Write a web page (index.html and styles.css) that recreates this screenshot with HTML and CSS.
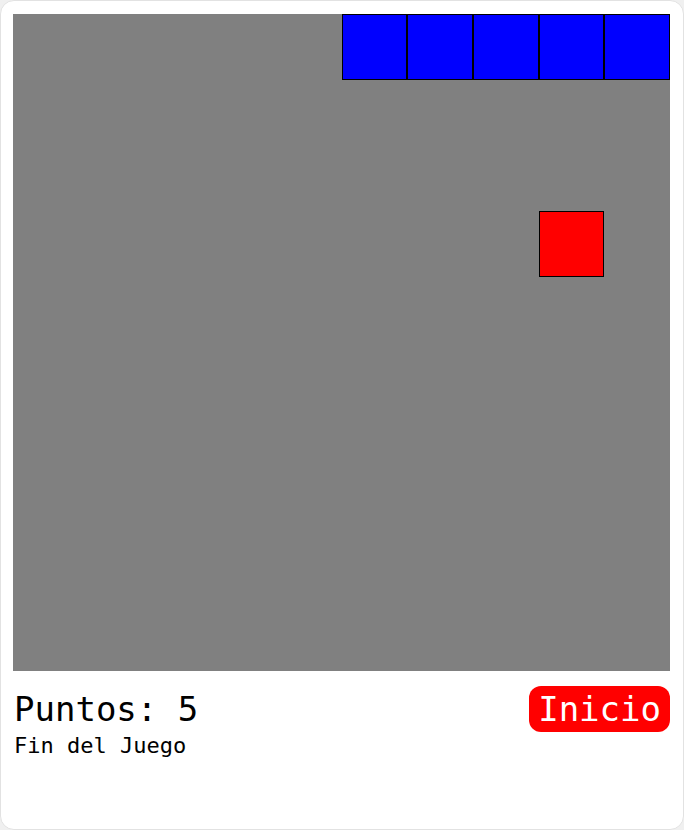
FILE: index.html
```html
<!DOCTYPE html>
<html lang="es">
<head>
<meta charset="utf-8">
<title>Snake</title>
<link rel="stylesheet" href="styles.css">
</head>
<body>
<div class="card">
  <div class="board">
    <div class="cell snake" style="grid-column:6;grid-row:1"></div>
    <div class="cell snake" style="grid-column:7;grid-row:1"></div>
    <div class="cell snake" style="grid-column:8;grid-row:1"></div>
    <div class="cell snake" style="grid-column:9;grid-row:1"></div>
    <div class="cell snake" style="grid-column:10;grid-row:1"></div>
    <div class="cell food" style="grid-column:9;grid-row:4"></div>
  </div>
  <div class="footer">
    <div class="info">
      <div class="score">Puntos: 5</div>
      <div class="status">Fin del Juego</div>
    </div>
    <button class="start">Inicio</button>
  </div>
</div>
</body>
</html>
```
FILE: styles.css
```css
html, body {
  margin: 0;
  padding: 0;
  background: #f0f0f0;
}
.card {
  box-sizing: border-box;
  width: 684px;
  height: 830px;
  background: #ffffff;
  border: 1px solid #e2e2e2;
  border-radius: 14px;
  padding: 13px 12px 12px 12px;
  font-family: "DejaVu Sans Mono", monospace;
}
.board {
  width: 657px;
  height: 657px;
  background: #808080;
  display: grid;
  grid-template-columns: repeat(10, 1fr);
  grid-template-rows: repeat(10, 1fr);
}
.cell {
  box-sizing: border-box;
  border: 1px solid #000;
}
.snake { background: #0000ff; }
.food { background: #ff0000; }
.footer {
  width: 657px;
  margin-top: 15px;
  display: flex;
  justify-content: space-between;
  align-items: flex-start;
}
.score {
  font-size: 34px;
  line-height: 46px;
  color: #000;
  padding-left: 1px;
}
.status {
  font-size: 22px;
  line-height: 28px;
  color: #000;
  padding-left: 1px;
}
.start {
  font-family: "DejaVu Sans Mono", monospace;
  font-size: 34px;
  line-height: 46px;
  height: 46px;
  padding: 0 9px;
  border: none;
  border-radius: 12px;
  background: #ff0000;
  color: #fff;
}
```
